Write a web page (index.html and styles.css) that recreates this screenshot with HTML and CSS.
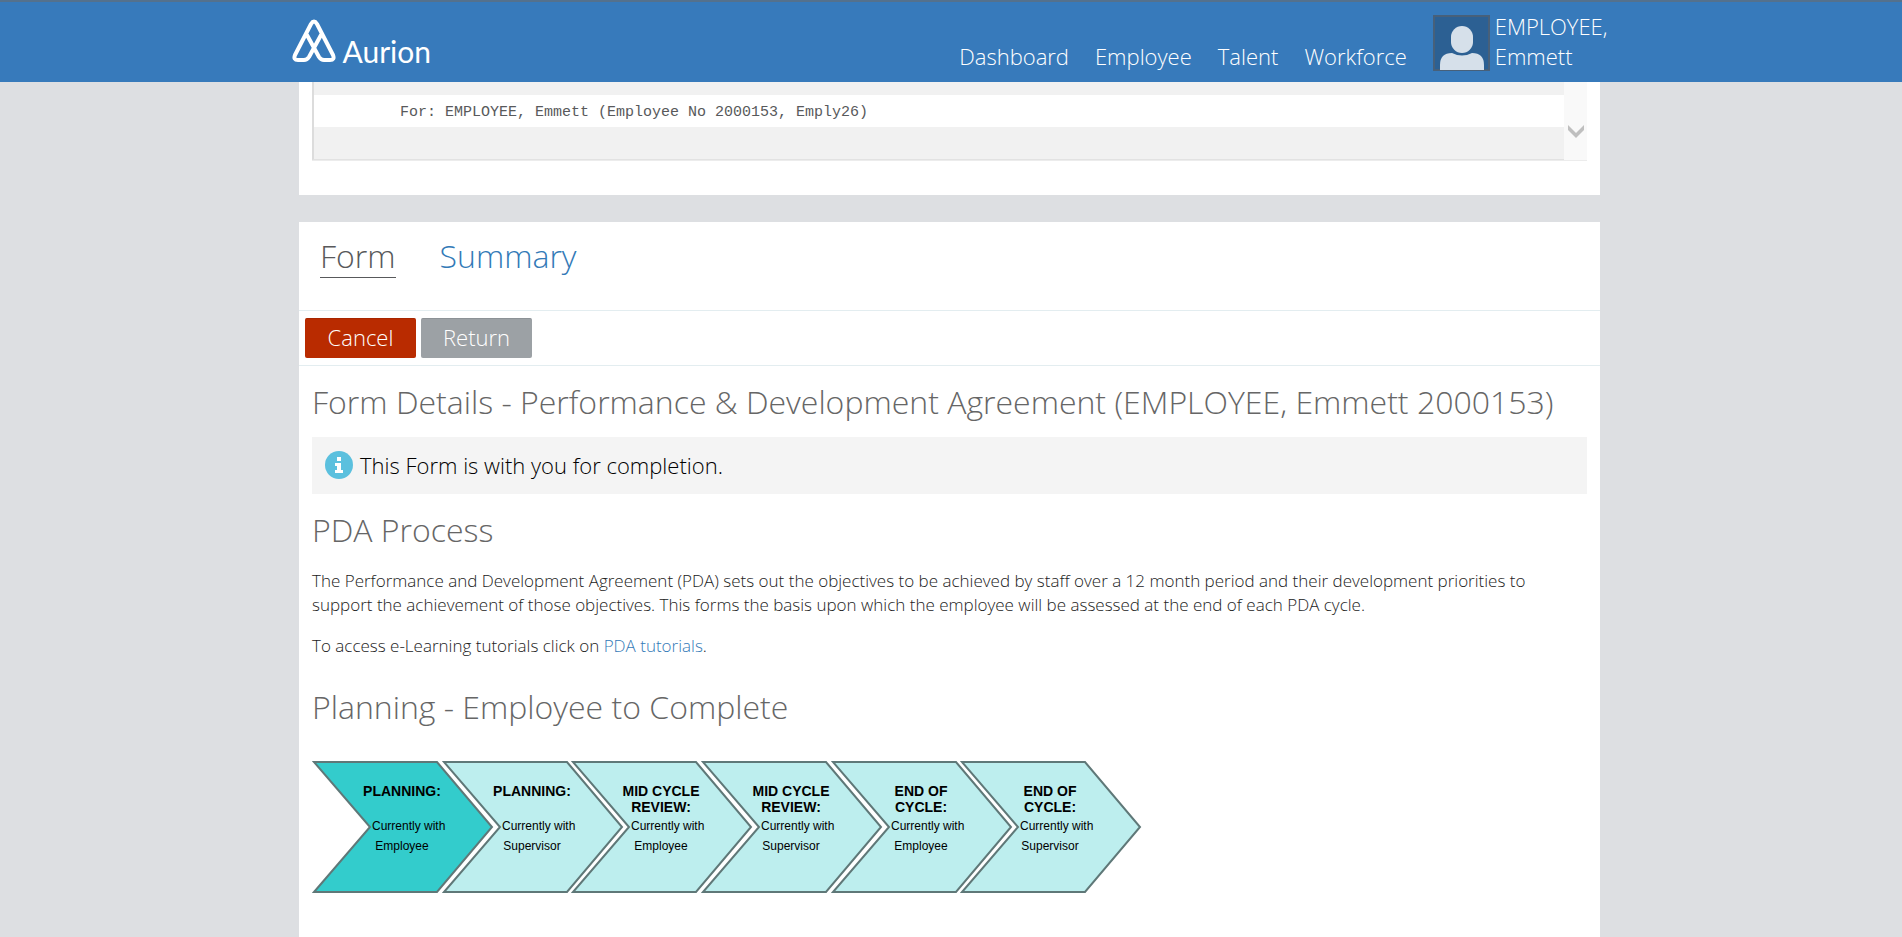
FILE: index.html
```html
<!DOCTYPE html>
<html lang="en">
<head>
<meta charset="utf-8">
<title>Aurion - Performance &amp; Development Agreement</title>
<link rel="stylesheet" href="styles.css">
</head>
<body>
<header class="topbar">
  <div class="topbar-inner">
    <a class="brand" href="#">
      <svg class="brand-mark" width="44" height="44" viewBox="0 0 44 44" aria-hidden="true">
        <g fill="none" stroke="#fff" stroke-width="4" stroke-linejoin="round" stroke-linecap="round">
          <path d="M15 16 L27 38 Q29 41 32 41 H38 Q43 41 41 36 L25 5 Q22 0 19 5 L3 36 Q1 41 6 41 H12 Q15 41 17 38 L29 16"/>
        </g>
      </svg>
      <span class="brand-name">Aurion</span>
    </a>
    <nav class="menu">
      <a href="#">Dashboard</a>
      <a href="#">Employee</a>
      <a href="#">Talent</a>
      <a href="#">Workforce</a>
    </nav>
    <a class="user" href="#">
      <svg class="avatar" width="57" height="56" viewBox="0 0 57 56" aria-hidden="true">
        <rect x="1" y="1" width="55" height="54" fill="#2c6093" stroke="#47607a" stroke-width="2"/>
        <rect x="18" y="11" width="22" height="27" rx="11" fill="#d6e0ea"/>
        <path d="M7 55 V50 Q7 38 19 38 Q29 43 39 38 Q51 38 51 50 V55 Z" fill="#d6e0ea"/>
      </svg>
      <span class="user-name">EMPLOYEE,<br>Emmett</span>
    </a>
  </div>
</header>

<main class="page">
  <section class="card card-history">
    <div class="history">
      <div class="history-rows">
        <div class="history-row history-row-cut"></div>
        <div class="history-row history-row-text">For: EMPLOYEE, Emmett (Employee No 2000153, Emply26)</div>
        <div class="history-row"></div>
      </div>
      <div class="scroller">
        <svg width="16" height="13" viewBox="0 0 16 13" aria-hidden="true"><path d="M0 0 L8 8 L16 0 V5 L8 13 L0 5 Z" fill="#bfbfbf"/></svg>
      </div>
    </div>
  </section>

  <section class="card">
    <nav class="tabs">
      <a class="tab tab-active" href="#">Form</a>
      <a class="tab" href="#">Summary</a>
    </nav>
    <div class="actions">
      <button class="btn btn-cancel" type="button">Cancel</button>
      <button class="btn btn-return" type="button">Return</button>
    </div>
    <div class="content">
      <h1 class="heading">Form Details - Performance &amp; Development Agreement (EMPLOYEE, Emmett 2000153)</h1>
      <div class="notice">
        <svg width="28" height="28" viewBox="0 0 28 28" aria-hidden="true">
          <circle cx="14" cy="14" r="14" fill="#5bc0de"/>
          <path d="M12 6h4v4h-4zM10 12h6v7h2v3h-8v-3h2v-4h-2z" fill="#fff"/>
        </svg>
        <span>This Form is with you for completion.</span>
      </div>
      <h2 class="heading heading-process">PDA Process</h2>
      <p class="copy">The Performance and Development Agreement (PDA) sets out the objectives to be achieved by staff over a 12 month period and their development priorities to support the achievement of those objectives. This forms the basis upon which the employee will be assessed at the end of each PDA cycle.</p>
      <p class="copy">To access e-Learning tutorials click on <a href="#">PDA tutorials</a>.</p>
      <h2 class="heading heading-planning">Planning - Employee to Complete</h2>
      <svg class="steps" width="832" height="136" viewBox="0 0 832 136" role="img" aria-label="Agreement stages">
        <defs><path id="step" d="M2 3 H125 L180 68 L125 133 H2 L58 68 Z"/></defs>
        <g><use href="#step" class="step step-current"/><text class="title" x="90" y="37">PLANNING:</text><text x="60" y="71">Currently with</text><text x="90" y="91" class="role">Employee</text></g>
        <g transform="translate(130 0)"><use href="#step" class="step"/><text class="title" x="90" y="37">PLANNING:</text><text x="60" y="71">Currently with</text><text x="90" y="91" class="role">Supervisor</text></g>
        <g transform="translate(259 0)"><use href="#step" class="step"/><text class="title" x="90" y="37">MID CYCLE</text><text class="title" x="90" y="53">REVIEW:</text><text x="60" y="71">Currently with</text><text x="90" y="91" class="role">Employee</text></g>
        <g transform="translate(389 0)"><use href="#step" class="step"/><text class="title" x="90" y="37">MID CYCLE</text><text class="title" x="90" y="53">REVIEW:</text><text x="60" y="71">Currently with</text><text x="90" y="91" class="role">Supervisor</text></g>
        <g transform="translate(519 0)"><use href="#step" class="step"/><text class="title" x="90" y="37">END OF</text><text class="title" x="90" y="53">CYCLE:</text><text x="60" y="71">Currently with</text><text x="90" y="91" class="role">Employee</text></g>
        <g transform="translate(648 0)"><use href="#step" class="step"/><text class="title" x="90" y="37">END OF</text><text class="title" x="90" y="53">CYCLE:</text><text x="60" y="71">Currently with</text><text x="90" y="91" class="role">Supervisor</text></g>
      </svg>
    </div>
  </section>
</main>
</body>
</html>
```
FILE: styles.css
```css
* { box-sizing: border-box; }
html { background: #dddfe2; }
body {
  margin: 0;
  font-family: "Open Sans", "Noto Sans", sans-serif;
  font-weight: 300;
  color: #222;
  background: #dddfe2;
}
a { color: #337ab7; text-decoration: none; }

.topbar {
  height: 82px;
  background: #377abb;
  border-top: 2px solid #54718d;
  padding-right: 3px;
}
.topbar-inner {
  max-width: 1316px;
  height: 100%;
  margin: 0 auto;
  display: flex;
  align-items: flex-start;
}
.brand { display: flex; align-items: flex-end; color: #fff; margin-top: 17px; }
.brand-name {
  font-family: Lato, sans-serif;
  font-weight: 400;
  font-size: 30px;
  line-height: 24px;
  margin-left: 7px;
}
.menu { display: flex; gap: 26px; margin-left: auto; padding-top: 39px; }
.menu a { color: #fff; font-size: 22px; line-height: 30px; }
.user {
  display: flex;
  gap: 5px;
  color: #fff;
  font-size: 22px;
  line-height: 30px;
  margin-left: 26px;
  padding-top: 9px;
}
.avatar { margin-top: 4px; }

.page { padding-right: 3px; }
.card { max-width: 1301px; margin: 0 auto; background: #fff; }
.card-history { padding: 0 13px 34px; margin-bottom: 27px; }
.history { display: flex; border-bottom: 1px solid #ececec; }
.history-rows { flex: 1; border-left: 2px solid #dcdcdc; border-bottom: 1px solid #e2e2e2; }
.history-row { height: 32px; background: #f1f1f1; }
.history-row-cut { height: 13px; }
.history-row-text {
  background: #fff;
  padding-left: 86px;
  font: 400 15px/36px "Liberation Mono", monospace;
  color: #58595b;
}
.scroller {
  width: 23px;
  background: #f9f9f9;
  display: flex;
  justify-content: center;
  align-items: flex-end;
  padding-bottom: 22px;
}

.tabs {
  display: flex;
  gap: 44px;
  padding: 12px 21px 32px;
  border-bottom: 1px solid #e3edf0;
}
.tab { font-size: 32px; line-height: 43px; }
.tab-active { color: #58595b; border-bottom: 1px solid #58595b; }
.actions {
  display: flex;
  gap: 5px;
  padding: 7px 6px;
  border-bottom: 1px solid #e3edf0;
}
.btn {
  width: 111px;
  height: 40px;
  border: 0;
  border-radius: 2px;
  padding: 0 0 3px;
  font: inherit;
  font-size: 22px;
  color: #fff;
}
.btn-cancel { background: #b92b00; border-top: 1px solid #a82600; }
.btn-return { background: #9ca1a5; border-top: 1px solid #8d9296; }

.content { padding: 14px 13px 48px; }
.heading { margin: 0; font-size: 32px; line-height: 44px; font-weight: 300; color: #666; }
.notice {
  display: flex;
  align-items: center;
  gap: 7px;
  height: 57px;
  margin: 13px 0 14px;
  padding: 0 13px 2px;
  background: #f4f4f4;
  font-size: 22px;
  color: #000;
}
.heading-process { margin-bottom: 17px; }
.copy { margin: 0 0 17px; font-size: 17px; line-height: 24px; }
.heading-planning { margin: 27px 0 30px; }

.steps { display: block; font-family: "Liberation Sans", Arial, sans-serif; font-size: 12px; font-weight: 400; fill: #000; }
.step { fill: #bdeeee; stroke: #5f7878; stroke-width: 2px; }
.step-current { fill: #33cccc; }
.title { font-size: 14px; font-weight: 700; text-anchor: middle; }
.role { text-anchor: middle; }
```
